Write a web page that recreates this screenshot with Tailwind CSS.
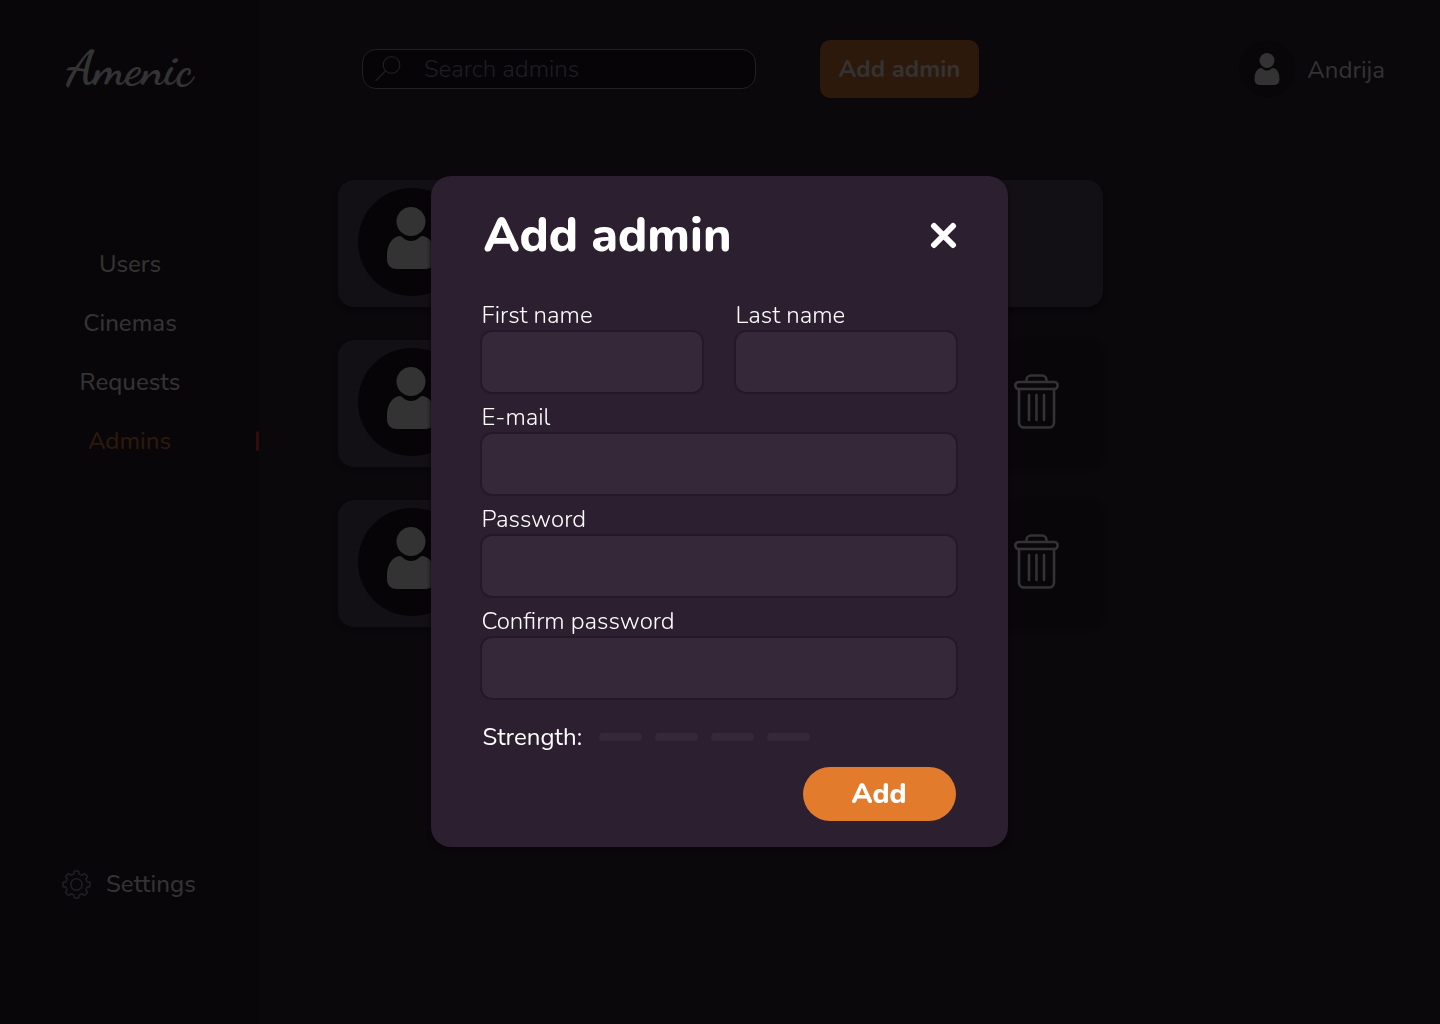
<!DOCTYPE html>
<html lang="en">
<head>
<meta charset="utf-8">
<meta name="viewport" content="width=device-width, initial-scale=1">
<title>Amenic – Admins</title>
<script src="https://cdn.jsdelivr.net/npm/@tailwindcss/browser@4"></script>
</head>
<body class="flex min-h-screen bg-[#0a080b] font-['Nunito','Lato',sans-serif] text-2xl leading-[30px] text-[#333333]">
<svg class="hidden" aria-hidden="true">
  <symbol id="person" viewBox="0 0 50 62">
    <circle cx="25" cy="14.5" r="14.5"/>
    <path d="M13.500 29C5 30 1 39 1 49v3c0 6 3.500 10 10 10h28c6.500 0 10-4 10-10v-3c0-10-4-19-12.500-20-3 0-5 5-11.500 5s-8.500-5-11.500-5Z"/>
  </symbol>
  <symbol id="trash" viewBox="0 0 45 56">
    <g fill="none" stroke="currentColor" stroke-width="2.600" stroke-linecap="round">
      <path d="M12.500 7.500V6a4.500 4.500 0 0 1 4.500-4.500h11A4.500 4.500 0 0 1 32.500 6v1.500"/>
      <rect x="1.300" y="8" width="42.400" height="7" rx="3.500"/>
      <path d="M5 15v33.500a5 5 0 0 0 5 5h25a5 5 0 0 0 5-5V15M15 21v25M22.500 21v25M30 21v25"/>
    </g>
  </symbol>
</svg>

<aside class="flex w-[259px] shrink-0 flex-col bg-[#080609]">
  <a href="#" class="mt-10 flex h-[58px] items-center justify-center font-['Dancing_Script',cursive] text-5xl font-bold">Amenic</a>
  <nav class="mt-[151px] flex flex-col gap-[29px] text-center font-medium">
    <a href="#" class="pl-px">Users</a>
    <a href="#" class="pl-px">Cinemas</a>
    <a href="#" class="pl-px">Requests</a>
    <a href="#" class="flex items-center text-[#2d190b]" aria-current="page"><span class="grow pl-[3px]">Admins</span><span class="h-5 w-[3px] rounded-xs bg-[#330b09]"></span></a>
  </nav>
  <a href="#" class="mt-auto mb-[125px] flex items-center gap-[15px] pl-[62px] font-medium">
    <svg class="size-[29px] text-[#1f1e25]" viewBox="0 0 29 29" fill="none" stroke="currentColor" stroke-width="1.600" stroke-linejoin="round"><circle cx="14.500" cy="14.500" r="5.700"/><path d="M12.400 1h4.200l.7 3.200c1 .2 1.700.5 2.500 1l2.700-1.700 3 3-1.700 2.700c.5.800.8 1.500 1 2.500l3.200.7v4.200l-3.200.7c-.2 1-.5 1.700-1 2.500l1.700 2.700-3 3-2.700-1.700c-.8.500-1.500.8-2.500 1l-.7 3.200h-4.200l-.7-3.200c-1-.2-1.700-.5-2.500-1l-2.700 1.700-3-3 1.700-2.700c-.5-.8-.8-1.500-1-2.500L1 16.600v-4.200l3.200-.7c.2-1 .5-1.700 1-2.500L3.500 6.500l3-3 2.700 1.700c.8-.5 1.500-.8 2.500-1Z"/></svg>
    Settings
  </a>
</aside>

<main class="grow pt-10">
  <header class="flex items-center pr-[55px] pl-[103px]">
    <label class="flex h-10 w-[394px] items-center gap-[23px] rounded-[14px] border border-[#212023] bg-[#060407] px-3">
      <svg class="size-[26px] shrink-0 text-[#1f1e21]" viewBox="0 0 26 26" fill="none" stroke="currentColor" stroke-width="1.200" stroke-linecap="round"><circle cx="16.500" cy="9" r="8.300"/><path d="M10.500 15 1 24.500"/></svg>
      <input type="search" aria-label="Search admins" placeholder="Search admins" class="min-w-0 grow bg-transparent font-light outline-none placeholder:text-[#1f1e21]">
    </label>
    <button class="ml-16 h-[58px] w-[159px] rounded-[10px] bg-[#2d190b] font-bold whitespace-nowrap">Add admin</button>
    <a href="#" class="ml-auto flex items-center gap-3">
      <span class="flex size-14 items-center justify-center rounded-full bg-[#080609]"><svg class="h-8 w-[26px] fill-current"><use href="#person"/></svg></span>
      <span class="pt-[2px]">Andrija</span>
    </a>
  </header>

  <ul class="mt-[82px] ml-[79px] flex max-w-[765px] flex-col gap-[33px]">
    <li class="flex h-[127px] items-start rounded-2xl bg-[#121015] pt-2 pl-5 shadow-[0_4px_4px_#080609]">
      <span class="flex size-[108px] items-center justify-center rounded-full bg-[#060407] pr-[2px] pb-2"><svg class="h-[62px] w-[50px] fill-current"><use href="#person"/></svg></span>
    </li>
    <li class="flex h-[127px] items-start rounded-2xl bg-[#080609] shadow-[0_2px_4px_#090709]">
      <div class="flex h-full w-[640px] items-start rounded-2xl bg-[#121015] pt-2 pl-5">
        <span class="flex size-[108px] items-center justify-center rounded-full bg-[#060407] pr-[2px] pb-2"><svg class="h-[62px] w-[50px] fill-current"><use href="#person"/></svg></span>
      </div>
      <button class="mt-[34px] ml-9" aria-label="Delete admin"><svg class="h-14 w-[45px]"><use href="#trash"/></svg></button>
    </li>
    <li class="flex h-[127px] items-start rounded-2xl bg-[#080609] shadow-[0_2px_4px_#090709]">
      <div class="flex h-full w-[640px] items-start rounded-2xl bg-[#121015] pt-2 pl-5">
        <span class="flex size-[108px] items-center justify-center rounded-full bg-[#060407] pr-[2px] pb-2"><svg class="h-[62px] w-[50px] fill-current"><use href="#person"/></svg></span>
      </div>
      <button class="mt-[34px] ml-9" aria-label="Delete admin"><svg class="h-14 w-[45px]"><use href="#trash"/></svg></button>
    </li>
  </ul>
</main>

<div class="fixed inset-0 flex items-center justify-center pr-[2px] pb-[2px]">
  <form role="dialog" aria-modal="true" aria-labelledby="dialog-title" class="flex w-full max-w-[577px] flex-col rounded-[20px] bg-[#2c1f30] pt-8 pr-[50px] pb-[26px] pl-[49px] text-white shadow-[0_4px_4px_#090709]">
    <div class="flex items-center justify-between pl-1">
      <h1 id="dialog-title" class="text-5xl leading-[54px] font-extrabold">Add admin</h1>
      <button type="button" aria-label="Close"><svg class="size-[28px]" viewBox="0 0 28 28" fill="none" stroke="currentColor" stroke-width="6" stroke-linecap="round"><path d="m4 5 19 19M23 5 4 24"/></svg></button>
    </div>
    <div class="mt-[38px] grid grid-cols-2 gap-x-[30px] gap-y-2 font-light">
      <div class="flex flex-col">
        <label for="first" class="pl-[2px]">First name</label>
        <input id="first" type="text" class="h-16 w-full rounded-xl border-2 border-[#251829] bg-[#352839] px-4 outline-none">
      </div>
      <div class="flex flex-col">
        <label for="last" class="pl-[2px]">Last name</label>
        <input id="last" type="text" class="h-16 w-full rounded-xl border-2 border-[#251829] bg-[#352839] px-4 outline-none">
      </div>
      <div class="col-span-2 flex flex-col">
        <label for="email" class="pl-[2px]">E-mail</label>
        <input id="email" type="email" class="h-16 w-full rounded-xl border-2 border-[#251829] bg-[#352839] px-4 outline-none">
      </div>
      <div class="col-span-2 flex flex-col">
        <label for="pass" class="pl-[2px]">Password</label>
        <input id="pass" type="password" class="h-16 w-full rounded-xl border-2 border-[#251829] bg-[#352839] px-4 outline-none">
      </div>
      <div class="col-span-2 flex flex-col">
        <label for="confirm" class="pl-[2px]">Confirm password</label>
        <input id="confirm" type="password" class="h-16 w-full rounded-xl border-2 border-[#251829] bg-[#352839] px-4 outline-none">
      </div>
    </div>
    <div class="mt-[22px] flex items-center gap-[13px] pl-[3px]">
      <span class="w-[103px]">Strength:</span>
      <span class="h-2 w-[43px] rounded-full bg-[#352839]"></span>
      <span class="h-2 w-[43px] rounded-full bg-[#352839]"></span>
      <span class="h-2 w-[43px] rounded-full bg-[#352839]"></span>
      <span class="h-2 w-[43px] rounded-full bg-[#352839]"></span>
    </div>
    <button type="submit" class="mt-[15px] mr-[2px] h-[54px] w-[153px] self-end rounded-full bg-[#e37b2d] text-[28px] font-extrabold">Add</button>
  </form>
</div>
</body>
</html>
